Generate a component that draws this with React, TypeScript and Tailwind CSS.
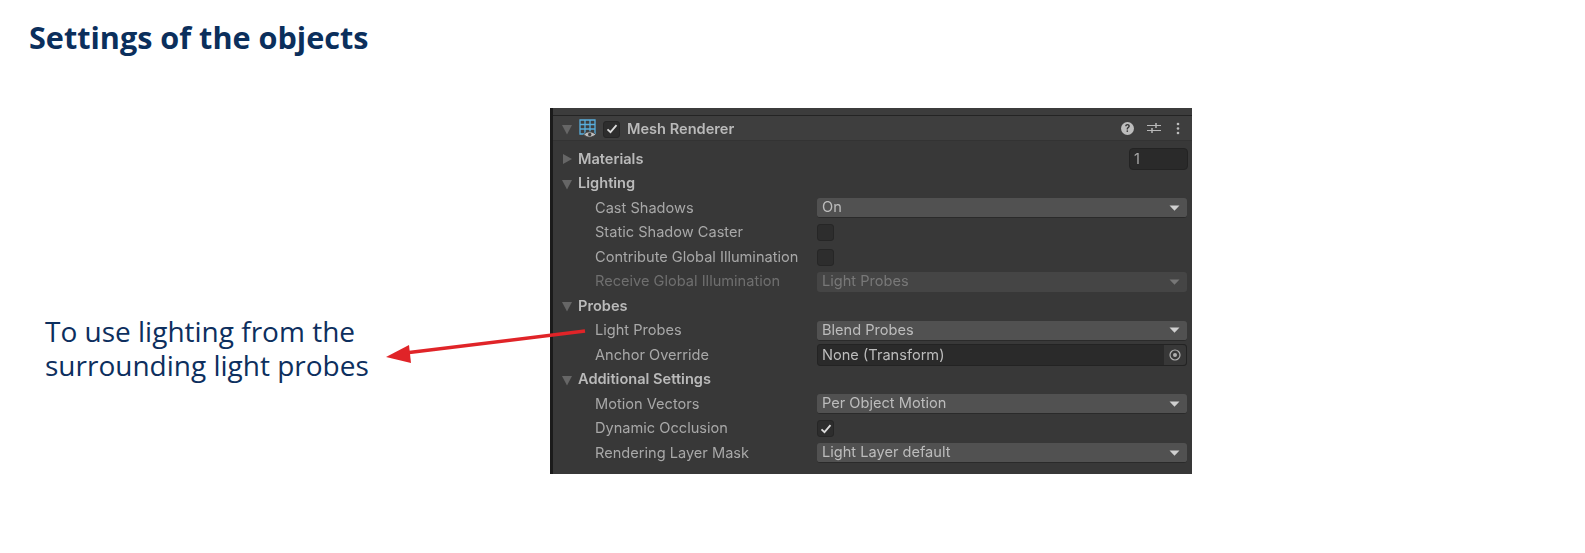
import { ReactNode } from "react"

const Caret = ({ open = true }: { open?: boolean }) => (
    <svg width="12" height="12" viewBox="0 0 12 12" className="shrink-0">
        {open
            ? <path d="M1 2h10L6 11.500z" fill="#666666" />
            : <path d="M2 1l9 5-9 5z" fill="#666666" />}
    </svg>
)

const DropArrow = ({ dim = false }: { dim?: boolean }) => (
    <svg width="11" height="6" viewBox="0 0 11 6" className="shrink-0">
        <path d="M0.5 0.500h10L5.500 5.800z" fill={dim ? "#777777" : "#d0d0d0"} />
    </svg>
)

const Tick = () => (
    <svg width="12" height="10" viewBox="0 0 12 10">
        <path d="M1.500 5.300l3 2.900 6-7" stroke="#dcdcdc" strokeWidth="1.800" fill="none" />
    </svg>
)

function Section({ label, open = true, right }: { label: string; open?: boolean; right?: ReactNode }) {
    return (
        <div className="h-[24.5px] flex items-center pl-[8px] pr-[4px]">
            <Caret open={open} />
            <span className="ml-[5px] font-semibold text-[#bababa]">{label}</span>
            {right}
        </div>
    )
}

function Row({ label, dim = false, children }: { label: string; dim?: boolean; children: ReactNode }) {
    return (
        <div className="h-[24.5px] flex items-center pr-[5px]">
            <span className={`w-[264px] shrink-0 pl-[42px] ${dim ? "text-[#6f6f6f]" : "text-[#a8a8a8]"}`}>{label}</span>
            {children}
        </div>
    )
}

function Select({ value, dim = false }: { value: string; dim?: boolean }) {
    return (
        <div className={`flex-1 h-[20px] rounded-[3px] flex items-center justify-between pl-[5px] pr-[7px] ${dim ? "bg-[#454545] text-[#787878]" : "bg-[#515151] text-[#bcbcbc] border-b border-[#2a2a2a]"}`}>
            <span>{value}</span>
            <DropArrow dim={dim} />
        </div>
    )
}

function Check({ checked = false }: { checked?: boolean }) {
    return (
        <div className="w-[17px] h-[17px] rounded-[3px] bg-[#2d2d2d] border border-[#262626] flex items-center justify-center">
            {checked && <Tick />}
        </div>
    )
}

function MeshIcon() {
    return (
        <svg width="20" height="20" viewBox="0 0 20 20" className="shrink-0">
            <path d="M1 1h15v14H1zM1 5.500h15M1 10h15M6 1v14M11 1v14" stroke="#58aedd" strokeWidth="1.300" fill="none" />
            <path d="M5 15.500c2-3.600 9-3.600 11.500 0-2.500 3.600-9.500 3.600-11.500 0z" fill="#bdbdbd" stroke="#3e3e3e" />
            <circle cx="10.700" cy="15.500" r="1.700" fill="#3e3e3e" />
        </svg>
    )
}

function HeaderIcons() {
    return (
        <div className="ml-auto flex items-center -translate-y-[1px]">
            <div className="w-[13px] h-[13px] rounded-full bg-[#bdbdbd] text-[#383838] text-[10px] leading-[13px] font-bold text-center">?</div>
            <svg width="14" height="12" viewBox="0 0 14 12" className="ml-[13px]">
                <path d="M0 3.500h14M0 8.500h14" stroke="#b8b8b8" strokeWidth="1.200" />
                <path d="M9 1v5M5 6v5" stroke="#b8b8b8" strokeWidth="1.500" />
            </svg>
            <svg width="4" height="13" viewBox="0 0 4 13" className="ml-[15px] mr-[9px]">
                <circle cx="2" cy="2" r="1.300" fill="#bdbdbd" />
                <circle cx="2" cy="6.500" r="1.300" fill="#bdbdbd" />
                <circle cx="2" cy="11" r="1.300" fill="#bdbdbd" />
            </svg>
        </div>
    )
}

function Inspector() {
    return (
        <div className="w-[642px] h-[366px] bg-[#383838] border-l-[3px] border-[#1b1b1b] font-['Inter',sans-serif] text-[14.6px] leading-none blur-[0.45px] overflow-hidden">
            <div className="h-[8px] bg-[#3c3c3c] border-b border-[#242424]" />
            <div className="h-[25px] bg-[#3e3e3e] border-b border-[#333333] flex items-center pt-[2px] pl-[8px] pr-[3px]">
                <Caret />
                <div className="ml-[6px]"><MeshIcon /></div>
                <div className="ml-[4px]"><Check checked /></div>
                <span className="ml-[7px] font-semibold text-[#bababa]">Mesh Renderer</span>
                <HeaderIcons />
            </div>
            <div className="pt-[6px]">
                <Section
                    label="Materials"
                    open={false}
                    right={
                        <div className="ml-auto w-[59px] h-[22px] rounded-[4px] bg-[#2a2a2a] border border-[#232323] pl-[4px] flex items-center text-[#a8a8a8]">1</div>
                    }
                />
                <Section label="Lighting" />
                <Row label="Cast Shadows"><Select value="On" /></Row>
                <Row label="Static Shadow Caster"><Check /></Row>
                <Row label="Contribute Global Illumination"><Check /></Row>
                <Row label="Receive Global Illumination" dim><Select value="Light Probes" dim /></Row>
                <Section label="Probes" />
                <Row label="Light Probes"><Select value="Blend Probes" /></Row>
                <Row label="Anchor Override">
                    <div className="flex-1 h-[22px] rounded-[3px] bg-[#2a2a2a] border border-[#232323] flex items-center justify-between pl-[4px] text-[#bcbcbc]">
                        <span>None (Transform)</span>
                        <div className="w-[22px] h-full bg-[#383838] rounded-r-[3px] flex items-center justify-center">
                            <svg width="12" height="12" viewBox="0 0 12 12">
                                <circle cx="6" cy="6" r="5" stroke="#b0b0b0" strokeWidth="1.200" fill="none" />
                                <circle cx="6" cy="6" r="2" fill="#b0b0b0" />
                            </svg>
                        </div>
                    </div>
                </Row>
                <Section label="Additional Settings" />
                <Row label="Motion Vectors"><Select value="Per Object Motion" /></Row>
                <Row label="Dynamic Occlusion"><Check checked /></Row>
                <Row label="Rendering Layer Mask"><Select value="Light Layer default" /></Row>
            </div>
        </div>
    )
}

export default function App() {
    return (
        <div className="relative w-[1585px] h-[553px] bg-white font-['Open_Sans',sans-serif] text-[#0b2f5c] overflow-hidden">
            <h1 className="pl-[29px] pt-[17px] text-[30.6px] leading-[40px] font-bold text-[#0b2f5c]">Settings of the objects</h1>
            <div className="flex items-start mt-[51px]">
                <div className="w-[550px] shrink-0 pl-[45px] pt-[207px] text-[28px] leading-[33.5px] text-[#0d2f5e]">
                    To use lighting from the<br />surrounding light probes
                </div>
                <Inspector />
            </div>
            {/* arrow lies over the panel edge */}
            <svg className="absolute left-0 top-0 pointer-events-none" width="1585" height="553" viewBox="0 0 1585 553">
                <path d="M405 353L585 331" stroke="#e02428" strokeWidth="3.500" />
                <path d="M386 357L409 345L411 363z" fill="#e02428" />
            </svg>
        </div>
    )
}
